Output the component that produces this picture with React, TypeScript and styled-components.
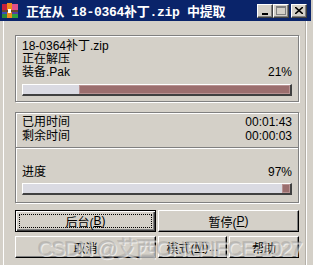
import styled, { createGlobalStyle } from "styled-components";

const GlobalStyle = createGlobalStyle`
  body {
    margin: 0;
    background: #d4d0c8;
  }
`;

const Window = styled.div`
  position: relative;
  width: 313px;
  height: 265px;
  overflow: hidden;
  background: #d4d0c8;
  font-family: "Liberation Sans", "Noto Sans CJK SC", sans-serif;
  font-size: 12px;
  color: #000;
`;

const TitleBar = styled.div`
  display: flex;
  align-items: center;
  width: 311px;
  height: 21px;
  padding-left: 2px;
  box-sizing: border-box;
  background: #0a246a;
`;

const TitleText = styled.div`
  margin-left: 8px;
  flex: 1;
  color: #fff;
  font-family: "Liberation Mono", "Noto Sans CJK SC", monospace;
  font-size: 13px;
  font-weight: bold;
  white-space: nowrap;
  letter-spacing: -0.3px;
`;

const CaptionButtons = styled.div`
  display: flex;
  margin-right: 4px;
`;

const CaptionButton = styled.div<{ $gap?: boolean }>`
  width: 16px;
  height: 14px;
  box-sizing: border-box;
  margin-left: ${(p) => (p.$gap ? "2px" : "0")};
  background: #d4d0c8;
  border-top: 1px solid #fff;
  border-left: 1px solid #fff;
  border-right: 1px solid #404040;
  border-bottom: 1px solid #404040;
  box-shadow: inset -1px -1px #808080;
  display: flex;
  align-items: center;
  justify-content: center;
`;

const Frame = styled.div`
  margin-left: 3px;
  width: 304px;
  height: 244px;
  box-sizing: border-box;
  border-left: 1px solid #fff;
  border-right: 1px solid #fff;
  box-shadow: inset -1px 0 #b4b0a8;
`;

const Body = styled.div`
  padding: 14px 0 0 11px;
  width: 284px;
`;

const Group = styled.div<{ $h: number }>`
  height: ${(p) => p.$h}px;
  box-sizing: border-box;
  border: 1px solid #808080;
  box-shadow: inset 1px 1px #fff, 1px 1px #fff;
  display: flex;
  flex-direction: column;
`;

const Section = styled.div<{ $pt: number }>`
  padding: ${(p) => p.$pt}px 6px 0 6px;
`;

const Divider = styled.div`
  height: 1px;
  margin-top: 4px;
  background: #808080;
  border-bottom: 1px solid #fff;
`;

const Line = styled.div<{ $lh?: number }>`
  display: flex;
  justify-content: space-between;
  line-height: ${(p) => p.$lh ?? 13}px;
  white-space: nowrap;
`;

const Bar = styled.div<{ $mt: number }>`
  display: flex;
  margin-top: ${(p) => p.$mt}px;
  height: 12px;
  box-sizing: border-box;
  border-top: 1px solid #fff;
  border-left: 1px solid #fff;
  border-right: 2px solid #404040;
  border-bottom: 2px solid #404040;
  background: #9b6e6e;
`;

const Done = styled.div`
  background: #dadae2;
`;

const Rest = styled.div`
  flex: 1;
  background: #9b6e6e;
  box-shadow: inset 1px 1px #b89292, inset -1px -1px #b89292;
`;

const Buttons = styled.div`
  display: grid;
  grid-template-columns: 141px 69px 70px;
  column-gap: 2px;
  row-gap: 4px;
  margin-top: 7px;
`;

const Button = styled.div<{ $span?: number; $default?: boolean }>`
  grid-column: span ${(p) => p.$span ?? 1};
  height: 22px;
  box-sizing: border-box;
  display: flex;
  align-items: center;
  justify-content: center;
  background: #d4d0c8;
  border-top: 1px solid ${(p) => (p.$default ? "#000" : "#fff")};
  border-left: 1px solid ${(p) => (p.$default ? "#000" : "#fff")};
  border-right: 1px solid #000;
  border-bottom: 1px solid #000;
  box-shadow: ${(p) =>
    p.$default
      ? "inset 1px 1px #fff, inset -1px -1px #404040, inset -2px -2px #808080"
      : "inset -1px -1px #808080"};
  position: relative;
`;

const Focus = styled.div`
  position: absolute;
  inset: 3px;
  border: 1px dotted #000;
`;

const Key = styled.span`
  text-decoration: underline;
`;

const Watermark = styled.div`
  position: absolute;
  left: 38px;
  top: 232px;
  font-family: "Liberation Sans", "Noto Sans CJK SC", sans-serif;
  font-size: 21px;
  letter-spacing: -1.3px;
  color: rgba(175, 175, 175, 0.55);
  text-shadow: 1px 1px rgba(255, 255, 255, 0.6), -1px -1px rgba(120, 120, 120, 0.25);
  white-space: nowrap;
  pointer-events: none;
`;

function RarIcon() {
  return (
    <svg width="16" height="16" viewBox="0 0 16 16">
      <rect x="0" y="1" width="5" height="6" fill="#c8203c" />
      <rect x="0" y="7" width="5" height="4" fill="#3a4fb8" />
      <rect x="0" y="11" width="5" height="4" fill="#2a8a3a" />
      <rect x="5" y="0" width="5" height="15" fill="#f08a1c" />
      <rect x="10" y="1" width="6" height="6" fill="#e0508a" />
      <rect x="10" y="7" width="6" height="4" fill="#5a3fa0" />
      <rect x="10" y="11" width="6" height="4" fill="#30a040" />
      <rect x="0" y="7" width="16" height="2" fill="#6a4a2a" />
      <rect x="6" y="6" width="3" height="4" fill="#fff" />
    </svg>
  );
}

function Progress({ value, mt }: { value: number; mt: number }) {
  return (
    <Bar $mt={mt}>
      <Done style={{ width: `${value}%` }} />
      <Rest />
    </Bar>
  );
}

export default function App() {
  return (
    <Window>
      <GlobalStyle />
      <TitleBar>
        <RarIcon />
        <TitleText>正在从 18-0364补丁.zip 中提取</TitleText>
        <CaptionButtons>
          <CaptionButton>
            <svg width="8" height="8" viewBox="0 0 8 8">
              <rect x="1" y="6" width="6" height="2" fill="#000" />
            </svg>
          </CaptionButton>
          <CaptionButton>
            <svg width="10" height="9" viewBox="0 0 10 9">
              <rect x="0.5" y="0.5" width="9" height="8" fill="none" stroke="#808080" />
              <rect x="0" y="1" width="10" height="1" fill="#808080" />
            </svg>
          </CaptionButton>
          <CaptionButton $gap>
            <svg width="8" height="7" viewBox="0 0 8 7">
              <path d="M0 0 L8 7 M8 0 L0 7" stroke="#000" strokeWidth="1.6" />
            </svg>
          </CaptionButton>
        </CaptionButtons>
      </TitleBar>
      <Frame>
        <Body>
          <Group $h={67}>
            <Section $pt={4}>
              <Line>18-0364补丁.zip</Line>
              <Line>正在解压</Line>
              <Line>
                <span>装备.Pak</span>
                <span>21%</span>
              </Line>
              <Progress value={21} mt={5} />
            </Section>
          </Group>
          <div style={{ height: 10 }} />
          <Group $h={91}>
            <Section $pt={2}>
              <Line $lh={14}>
                <span>已用时间</span>
                <span>00:01:43</span>
              </Line>
              <Line $lh={14}>
                <span>剩余时间</span>
                <span>00:00:03</span>
              </Line>
            </Section>
            <Divider />
            <Section $pt={16}>
              <Line $lh={14}>
                <span>进度</span>
                <span>97%</span>
              </Line>
              <Progress value={97} mt={4} />
            </Section>
          </Group>
          <Buttons>
            <Button $default>
              <Focus />
              后台(<Key>B</Key>)
            </Button>
            <Button $span={2}>
              暂停(<Key>P</Key>)
            </Button>
            <Button>取消</Button>
            <Button>
              模式(<Key>M</Key>)...
            </Button>
            <Button>帮助</Button>
          </Buttons>
        </Body>
      </Frame>
      <Watermark>CSDN @艾西ONEPIECE-1027</Watermark>
    </Window>
  );
}
